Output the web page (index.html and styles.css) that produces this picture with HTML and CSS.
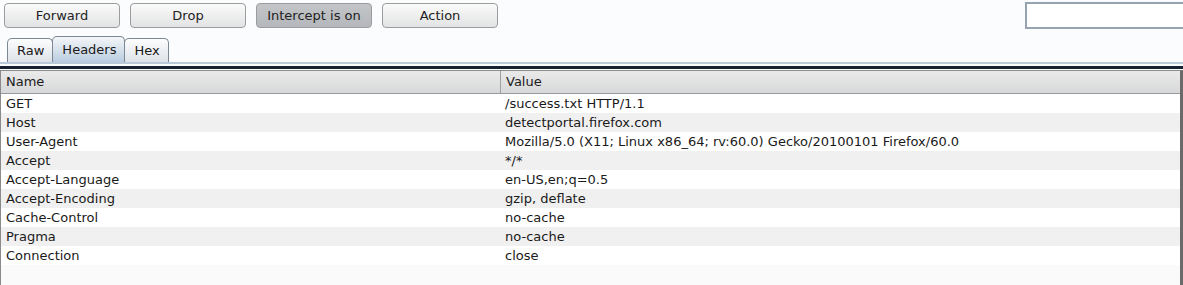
FILE: index.html
```html
<!DOCTYPE html>
<html lang="en">

<head>
    <meta charset="UTF-8">
    <title>Intercept</title>
    <link rel="stylesheet" href="styles.css">
</head>

<body>
    <!-- Toolbar -->
    <div class="toolbar">
        <button class="btn">Forward</button>
        <button class="btn">Drop</button>
        <button class="btn on">Intercept is on</button>
        <button class="btn">Action</button>
        <input type="text" class="search" />
    </div>

    <!-- Tabs -->
    <div class="tabs">
        <div class="tab">Raw</div>
        <div class="tab active">Headers</div>
        <div class="tab">Hex</div>
    </div>
    <div class="tab-line"></div>

    <!-- Headers table -->
    <div class="table">
        <div class="row head">
            <div class="cell name">Name</div>
            <div class="cell value">Value</div>
        </div>
        <div id="rows"></div>
        <div class="filler"></div>
    </div>

    <script>
        const headers = [
            ["GET", "/success.txt HTTP/1.1"],
            ["Host", "detectportal.firefox.com"],
            ["User-Agent", "Mozilla/5.0 (X11; Linux x86_64; rv:60.0) Gecko/20100101 Firefox/60.0"],
            ["Accept", "*/*"],
            ["Accept-Language", "en-US,en;q=0.5"],
            ["Accept-Encoding", "gzip, deflate"],
            ["Cache-Control", "no-cache"],
            ["Pragma", "no-cache"],
            ["Connection", "close"]
        ];

        const rows = document.getElementById("rows");
        headers.forEach(h => {
            const row = document.createElement("div");
            row.classList.add("row");
            row.innerHTML = `
                <div class="cell name">${h[0]}</div>
                <div class="cell value">${h[1]}</div>
            `;
            rows.appendChild(row);
        });
    </script>
</body>

</html>
```

FILE: styles.css
```css
/* Basic Styles */
body {
    font-family: "DejaVu Sans", sans-serif;
    font-size: 13px;
    color: #1a1a1a;
    background-color: #fbfcfd;
    margin: 0;
    padding: 0;
    overflow: hidden;
}

.toolbar {
    display: flex;
    align-items: flex-start;
    gap: 10px;
    padding: 3px 0 0 4px;
    height: 34px;
    box-sizing: border-box;
}

.btn {
    width: 116px;
    height: 25px;
    font-family: inherit;
    font-size: 13px;
    color: #222;
    border: 1px solid #9c9c9c;
    border-radius: 4px;
    background: linear-gradient(#fafafa, #e2e3e4);
    padding: 0;
}

.btn.on {
    background: linear-gradient(#c3c5c8, #b4b7bb);
}

.search {
    margin-left: auto;
    margin-top: -1px;
    width: 158px;
    height: 27px;
    box-sizing: border-box;
    border: 2px solid #96a4b1;
    border-right: none;
    background-color: #fff;
}

.tabs {
    display: flex;
    align-items: flex-end;
    padding-left: 7px;
    height: 28px;
}

.tab {
    height: 23px;
    line-height: 23px;
    padding: 0 8px 0 9px;
    border: 1px solid #7d8793;
    border-bottom: none;
    border-radius: 5px 5px 0 0;
    background: linear-gradient(#fdfdfd, #dde3e9);
    margin-right: -1px;
}

.tab.active {
    height: 25px;
    line-height: 26px;
    background: linear-gradient(#f4f6f8, #b9cde0);
}

.tab-line {
    height: 2px;
    background-color: #b9cadb;
    border-bottom: 2px solid #fbfcfd;
    box-shadow: 0 3px 0 #152230;
    margin-bottom: 4px;
}

.table {
    border-top: 1px solid #8a8a8a;
    border-left: 1px solid #8a8a8a;
    border-right: 3px solid #6a6a6a;
    height: 220px;
    display: flex;
    flex-direction: column;
}

.row {
    display: flex;
    height: 19px;
    line-height: 19px;
    background-color: #fff;
}

.row:nth-child(even) {
    background-color: #f0f0f0;
}

.row.head {
    height: 22px;
    line-height: 22px;
    background: linear-gradient(#eaeaea, #d7d8d9);
    border-bottom: 1px solid #9a9a9a;
}

.cell {
    padding-left: 5px;
    white-space: nowrap;
}

.name {
    width: 494px;
}

.head .name {
    border-right: 1px solid #a0a0a0;
}

.filler {
    flex: 1;
    background-color: #fafafa;
}
```
